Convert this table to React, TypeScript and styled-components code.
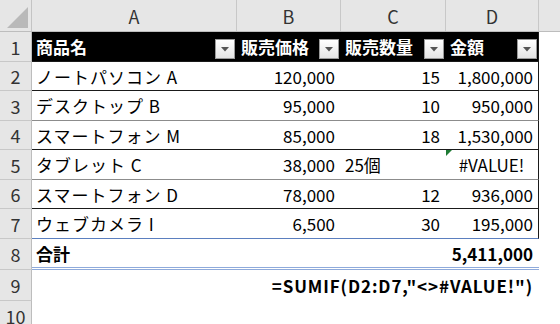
import React from "react";
import styled, { createGlobalStyle } from "styled-components";

const COLS = "205px 104px 105px 93px";

const GlobalStyle = createGlobalStyle`
  html, body {
    margin: 0;
    padding: 0;
    background: #ffffff;
    overflow: hidden;
  }
  body {
    font-family: "Noto Sans CJK JP", "Noto Sans", sans-serif;
  }
`;

const Sheet = styled.div`
  width: 560px;
  height: 324px;
  display: flex;
  flex-direction: column;
  overflow: hidden;
  color: #000;
`;

const Row = styled.div<{ $h: number }>`
  display: grid;
  grid-template-columns: 32px 507px 1fr;
  height: ${(p) => p.$h}px;
  flex-shrink: 0;
`;

const HeaderBar = styled.div`
  display: grid;
  grid-template-columns: 32px ${COLS} 1fr;
  height: 32px;
  flex-shrink: 0;
  background: #e6e6e6;
  border-bottom: 1px solid #bdbdbd;
  box-sizing: border-box;
`;

const Corner = styled.div`
  position: relative;
  border-right: 1px solid #c4c4c4;
  svg {
    position: absolute;
    left: 7px;
    top: 7px;
  }
`;

const ColLetter = styled.div`
  display: flex;
  align-items: center;
  justify-content: center;
  border-right: 1px solid #c8c8c8;
  font-size: 18px;
  color: #333;
  line-height: 1;
`;

const RowHead = styled.div`
  display: flex;
  align-items: center;
  justify-content: center;
  background: #e6e6e6;
  border-right: 1px solid #bdbdbd;
  border-bottom: 1px solid #c8c8c8;
  box-sizing: border-box;
  font-size: 18px;
  color: #333;
  line-height: 1;
`;

type Edge = "black" | "gray" | "blue" | "double" | "none";

const edgeColor: Record<Edge, string> = {
  black: "1px solid #1a1a1a",
  gray: "1px solid #8c8c8c",
  blue: "1px solid #5b7fbf",
  double: "3px double #8eaadb",
  none: "0",
};

const Body = styled.div<{ $bottom: Edge; $right?: boolean; $dark?: boolean }>`
  display: grid;
  grid-template-columns: ${COLS};
  box-sizing: border-box;
  border-bottom: ${(p) => edgeColor[p.$bottom]};
  border-right: ${(p) => (p.$right ? "1px solid #1a1a1a" : "0")};
  background: ${(p) => (p.$dark ? "#000" : "#fff")};
`;

const FullBody = styled.div`
  display: flex;
  align-items: center;
  justify-content: flex-end;
  padding-right: 6px;
  font-size: 17px;
  font-weight: 700;
  letter-spacing: 0.9px;
  line-height: 1;
`;

const Cell = styled.div<{ $align?: "left" | "right" | "center"; $bold?: boolean; $wide?: boolean }>`
  position: relative;
  display: flex;
  align-items: center;
  justify-content: ${(p) =>
    p.$align === "right" ? "flex-end" : p.$align === "center" ? "center" : "flex-start"};
  padding: 0 6px 0 4px;
  font-size: 17px;
  font-weight: ${(p) => (p.$bold ? 700 : 400)};
  letter-spacing: ${(p) => (p.$wide ? "1px" : "0")};
  line-height: 1;
  white-space: nowrap;
`;

const HeadCell = styled.div`
  display: flex;
  align-items: center;
  justify-content: space-between;
  padding: 0 2px 0 4px;
  color: #fff;
  font-size: 17px;
  font-weight: 700;
  line-height: 1;
  white-space: nowrap;
`;

const FilterButton = styled.div`
  width: 20px;
  height: 20px;
  margin-top: 5px;
  box-sizing: border-box;
  border: 1px solid #9a9a9a;
  background: linear-gradient(#ffffff, #e4e4e4);
  display: flex;
  align-items: center;
  justify-content: center;
  flex-shrink: 0;
`;

const ErrorMark = styled.span`
  position: absolute;
  left: 0;
  top: 0;
  width: 0;
  height: 0;
  border-top: 6px solid #1e7b34;
  border-right: 6px solid transparent;
`;

const Filter = () => (
  <FilterButton>
    <svg width="8" height="5" viewBox="0 0 8 5">
      <polygon points="0,0 8,0 4,4.5" fill="#555" />
    </svg>
  </FilterButton>
);

type Item = {
  name: string;
  price: string;
  qty: string;
  amount: string;
  bottom: Edge;
  broken?: boolean;
};

const items: Item[] = [
  { name: "ノートパソコン A", price: "120,000", qty: "15", amount: "1,800,000", bottom: "black" },
  { name: "デスクトップ B", price: "95,000", qty: "10", amount: "950,000", bottom: "gray" },
  { name: "スマートフォン M", price: "85,000", qty: "18", amount: "1,530,000", bottom: "black" },
  { name: "タブレット C", price: "38,000", qty: "25個", amount: "#VALUE!", bottom: "gray", broken: true },
  { name: "スマートフォン D", price: "78,000", qty: "12", amount: "936,000", bottom: "black" },
  { name: "ウェブカメラ I", price: "6,500", qty: "30", amount: "195,000", bottom: "blue" },
];

const heights = [29, 30, 29, 30, 29, 30];

export default function App() {
  return (
    <>
      <GlobalStyle />
      <Sheet>
        <HeaderBar>
          <Corner>
            <svg width="21" height="21" viewBox="0 0 21 21">
              <polygon points="21,0 21,21 0,21" fill="#b9b9b9" />
            </svg>
          </Corner>
          {["A", "B", "C", "D"].map((c) => (
            <ColLetter key={c}>{c}</ColLetter>
          ))}
          <div />
        </HeaderBar>

        <Row $h={30}>
          <RowHead>1</RowHead>
          <Body $bottom="black" $right $dark>
            {["商品名", "販売価格", "販売数量", "金額"].map((h) => (
              <HeadCell key={h}>
                {h}
                <Filter />
              </HeadCell>
            ))}
          </Body>
          <div />
        </Row>

        {items.map((it, i) => (
          <Row $h={heights[i]} key={it.name}>
            <RowHead>{i + 2}</RowHead>
            <Body $bottom={it.bottom} $right>
              <Cell $wide>{it.name}</Cell>
              <Cell $align="right">{it.price}</Cell>
              <Cell $align={it.broken ? "left" : "right"}>{it.qty}</Cell>
              <Cell $align={it.broken ? "center" : "right"}>
                {it.broken && <ErrorMark />}
                {it.amount}
              </Cell>
            </Body>
            <div />
          </Row>
        ))}

        <Row $h={31}>
          <RowHead>8</RowHead>
          <Body $bottom="double">
            <Cell $bold>合計</Cell>
            <Cell />
            <Cell />
            <Cell $align="right" $bold>
              5,411,000
            </Cell>
          </Body>
          <div />
        </Row>

        <Row $h={31}>
          <RowHead>9</RowHead>
          <FullBody>=SUMIF(D2:D7,"&lt;&gt;#VALUE!")</FullBody>
          <div />
        </Row>

        <Row $h={30}>
          <RowHead>10</RowHead>
          <div />
          <div />
        </Row>
      </Sheet>
    </>
  );
}
